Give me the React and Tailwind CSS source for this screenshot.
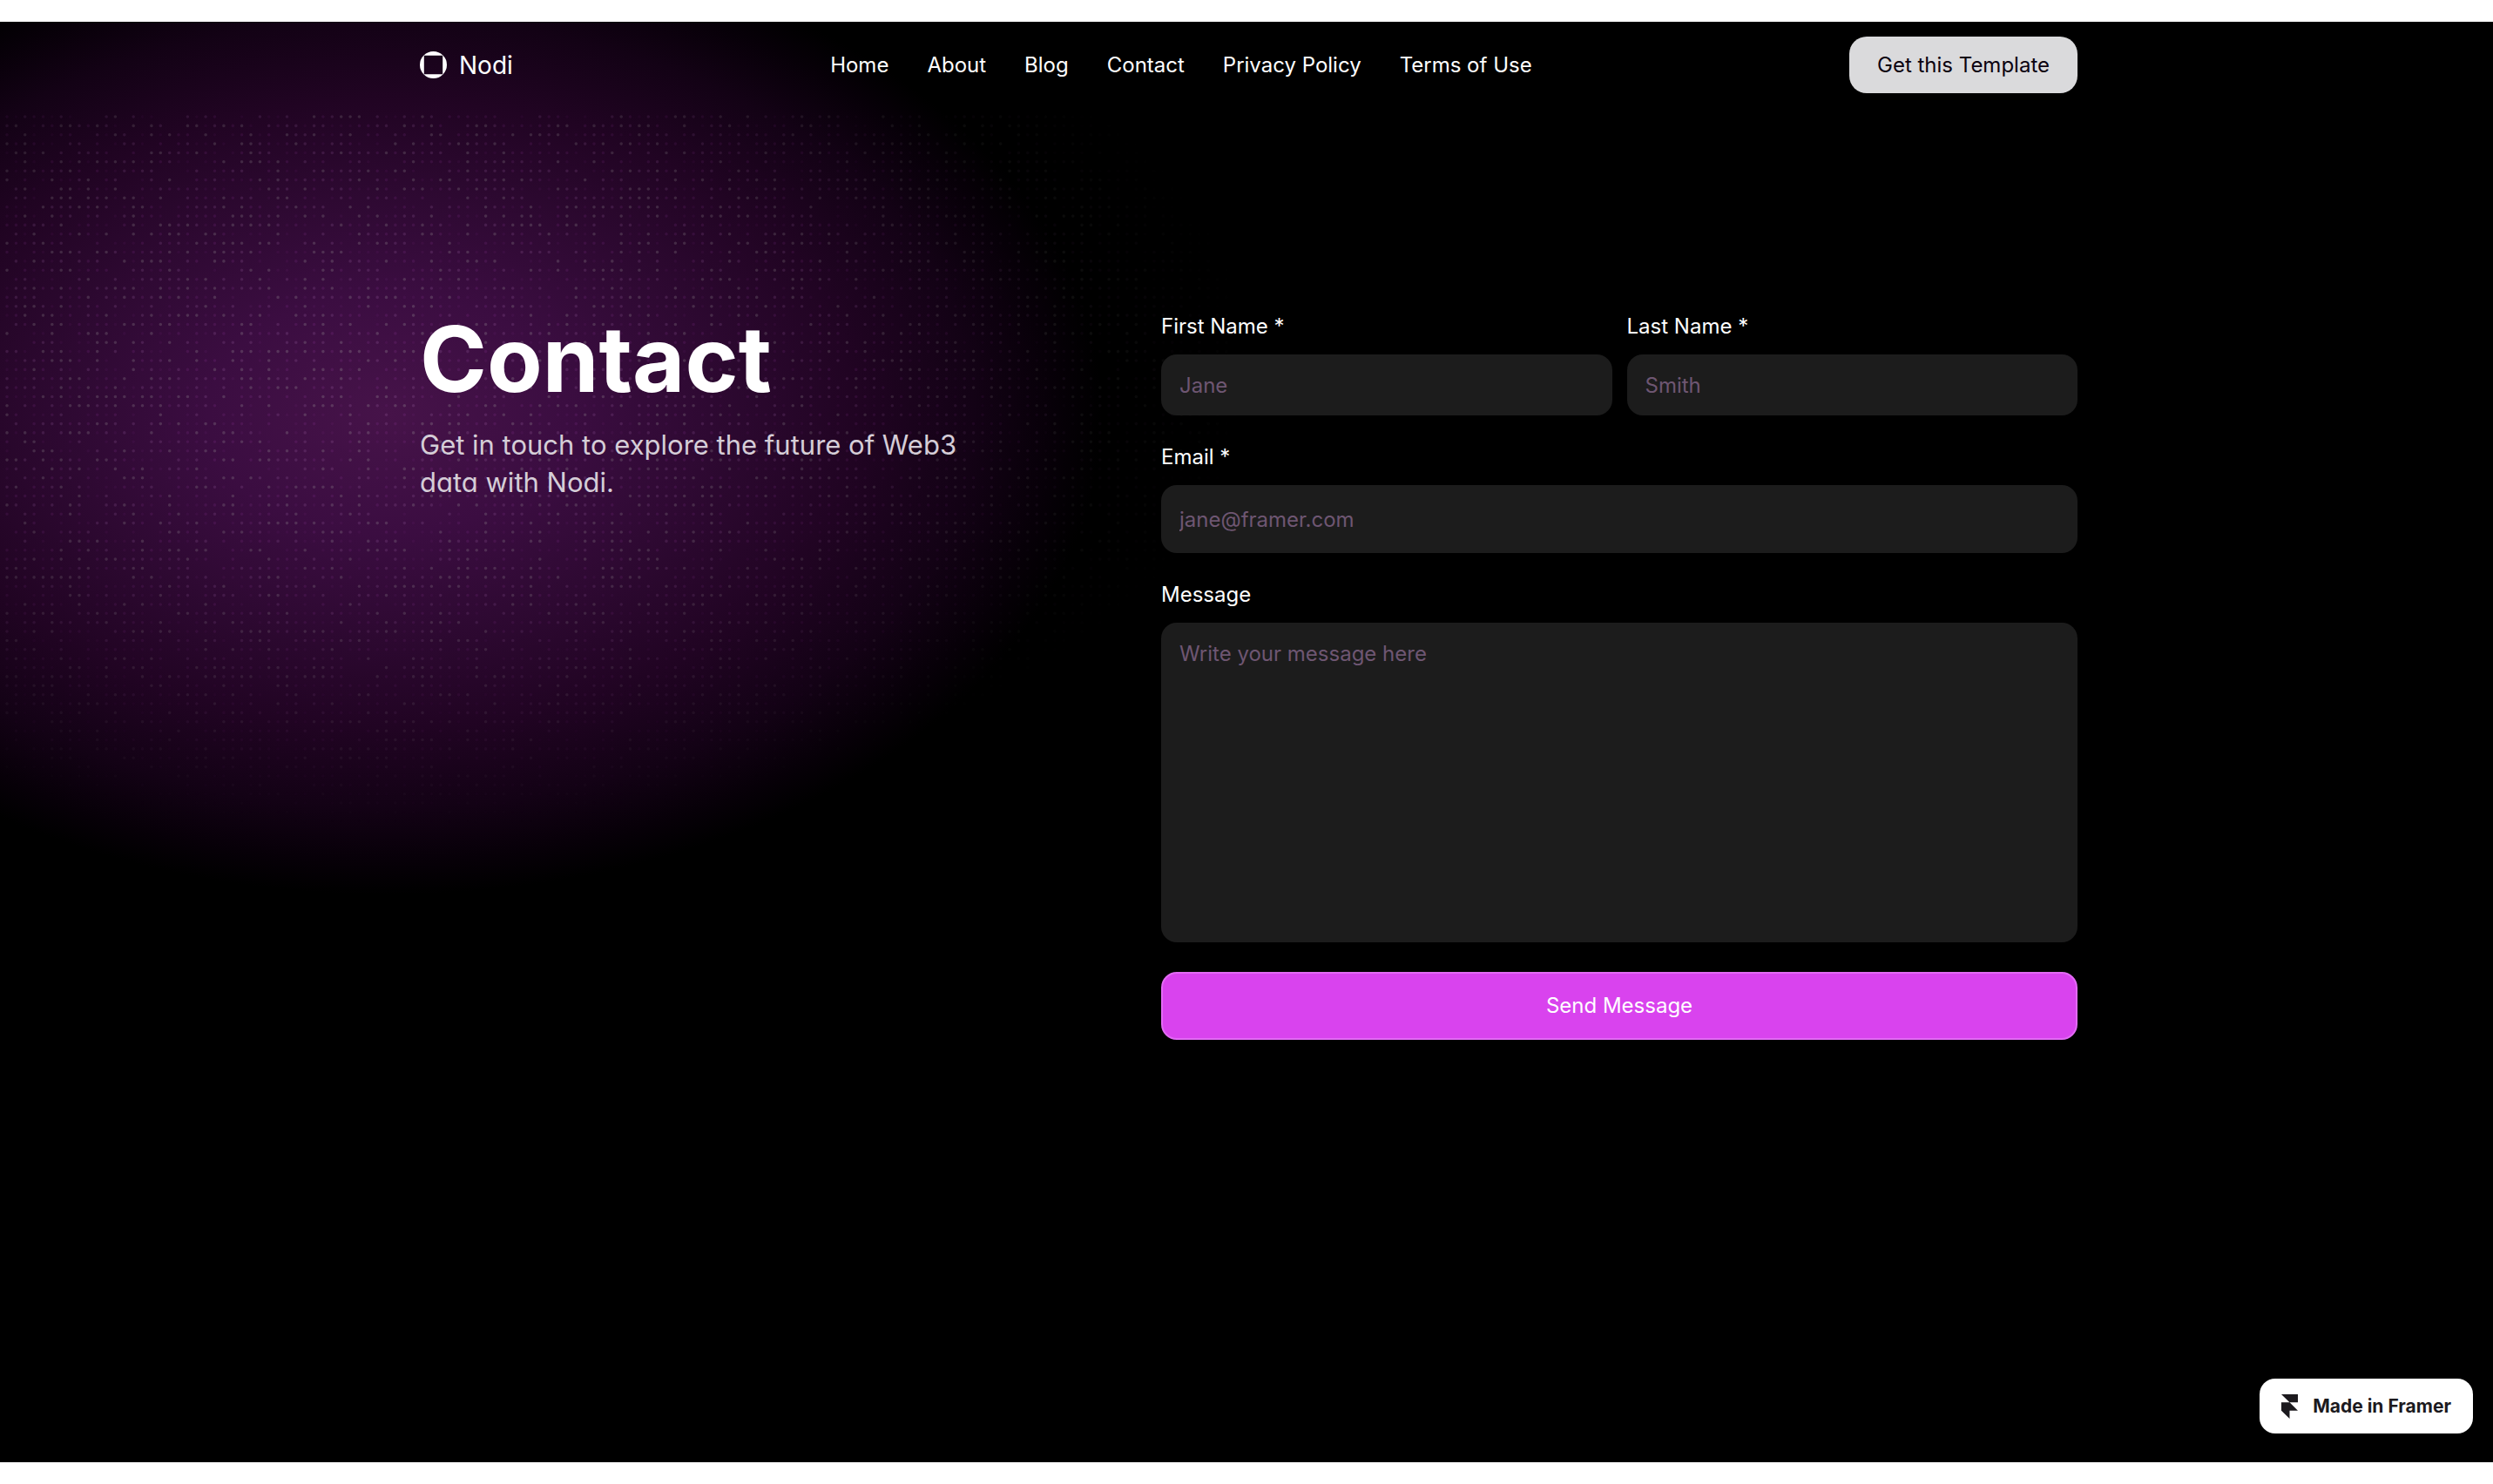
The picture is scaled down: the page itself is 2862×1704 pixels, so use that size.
// App.jsx
import { useMemo } from 'react';

const NAV_LINKS = ['Home', 'About', 'Blog', 'Contact', 'Privacy Policy', 'Terms of Use'];

const DOT_COLS = 140;
const DOT_ROWS = 82;
const DOT_PITCH = 10.37;
const DOT_TIERS = [
    { color: '#a03fae', opacity: 0.08 },
    { color: '#a03fae', opacity: 0.17 },
    { color: '#a86fb0', opacity: 0.22 },
    { color: '#a9a9a8', opacity: 0.26 },
];

// small seeded generator so the dots stay the same on every render
const createRandom = (seed) => {
    let state = seed;
    return () => {
        state = (state * 1664525 + 1013904223) % 4294967296;
        return state / 4294967296;
    };
};

const buildDotPaths = () => {
    const random = createRandom(42);
    const paths = DOT_TIERS.map(() => []);
    for (let row = 0; row < DOT_ROWS; row++) {
        for (let col = 0; col < DOT_COLS; col++) {
            const tier = Math.floor(random() * 5);
            if (tier >= DOT_TIERS.length) continue;
            paths[tier].push(`M${(8 + col * DOT_PITCH).toFixed(1)} ${(109 + row * DOT_PITCH).toFixed(1)}h0`);
        }
    }
    return paths.map((parts) => parts.join(''));
};

const Background = () => {
    const dotPaths = useMemo(buildDotPaths, []);

    return (
        <svg className="pointer-events-none absolute top-0 left-0" width="1500" height="1100" aria-hidden="true">
            <defs>
                <radialGradient
                    id="glow"
                    gradientUnits="userSpaceOnUse"
                    cx="0"
                    cy="0"
                    r="1"
                    gradientTransform="translate(445 450) scale(820 552)"
                >
                    <stop offset="0" stopColor="#461349" />
                    <stop offset="0.25" stopColor="#3b0d41" />
                    <stop offset="0.45" stopColor="#2e0932" />
                    <stop offset="0.65" stopColor="#210423" />
                    <stop offset="0.82" stopColor="#130215" />
                    <stop offset="0.93" stopColor="#070008" />
                    <stop offset="1" stopColor="#000000" />
                </radialGradient>
                <radialGradient
                    id="dotFade"
                    gradientUnits="userSpaceOnUse"
                    cx="0"
                    cy="0"
                    r="1"
                    gradientTransform="translate(440 400) scale(1000 530)"
                >
                    <stop offset="0" stopColor="#fff" />
                    <stop offset="0.5" stopColor="#fff" stopOpacity="0.8" />
                    <stop offset="1" stopColor="#fff" stopOpacity="0" />
                </radialGradient>
                <mask id="dotMask" maskUnits="userSpaceOnUse" x="0" y="0" width="1500" height="1100">
                    <rect width="1500" height="1100" fill="url(#dotFade)" />
                </mask>
            </defs>
            <rect width="1500" height="1100" fill="url(#glow)" />
            <g mask="url(#dotMask)" strokeWidth="3.6" strokeLinecap="round">
                {dotPaths.map((d, index) => (
                    <path
                        key={index}
                        d={d}
                        stroke={DOT_TIERS[index].color}
                        strokeOpacity={DOT_TIERS[index].opacity}
                    />
                ))}
            </g>
        </svg>
    );
};

const Logo = () => (
    <svg className="size-[31px]" viewBox="0 0 31 31" fill="currentColor" aria-hidden="true">
        <path
            fillRule="evenodd"
            d="M15.5 0a15.5 15.5 0 1 1 0 31a15.5 15.5 0 0 1 0-31zM4.8 4.8v21.4h21.4V4.8z"
        />
    </svg>
);

const Header = () => (
    <header className="flex h-[99px] items-center justify-between">
        <a href="#home" className="flex items-center gap-[14px] text-[28px] leading-9">
            <Logo />
            Nodi
        </a>
        <nav className="flex gap-11 text-2xl">
            {NAV_LINKS.map((link) => (
                <a key={link} href="#top" className="whitespace-nowrap hover:opacity-80">
                    {link}
                </a>
            ))}
        </nav>
        <a
            href="#template"
            className="flex h-[65px] items-center rounded-[20px] bg-[#dadadc] px-8 text-2xl whitespace-nowrap text-[#0c0210]"
        >
            Get this Template
        </a>
    </header>
);

const FIELD =
    'w-full rounded-[18px] bg-[#1c1c1c] px-[21px] text-2xl text-white placeholder:text-[#6e5672] focus:outline-none';

const Field = ({ id, label, children }) => (
    <div className="flex min-w-0 flex-1 flex-col gap-[14px]">
        <label htmlFor={id} className="text-2xl leading-9">
            {label}
        </label>
        {children}
    </div>
);

const ContactForm = () => (
    <form className="flex flex-1 flex-col gap-[30px]" onSubmit={(e) => e.preventDefault()}>
        <div className="flex gap-[17px]">
            <Field id="firstName" label="First Name *">
                <input id="firstName" type="text" required placeholder="Jane" className={`${FIELD} h-[70px]`} />
            </Field>
            <Field id="lastName" label="Last Name *">
                <input id="lastName" type="text" required placeholder="Smith" className={`${FIELD} h-[70px]`} />
            </Field>
        </div>
        <Field id="email" label="Email *">
            <input id="email" type="email" required placeholder="jane@framer.com" className={`${FIELD} h-[78px]`} />
        </Field>
        <Field id="message" label="Message">
            <textarea
                id="message"
                placeholder="Write your message here"
                className={`${FIELD} block h-[367px] resize-none py-[18px] leading-9`}
            />
        </Field>
        <button
            type="submit"
            className="mt-1 h-[78px] rounded-[18px] border-2 border-[#e36af5] bg-[#d943ee] text-2xl text-white"
        >
            Send Message
        </button>
    </form>
);

const FramerBadge = () => (
    <a
        href="#framer"
        className="absolute right-[23px] bottom-[33px] flex h-[63px] items-center gap-[17px] rounded-[18px] bg-white px-[25px] text-[21px] font-bold text-[#1c1a1e]"
    >
        <svg className="h-7 w-[19px]" viewBox="0 0 19 28" fill="currentColor" aria-hidden="true">
            <path d="M0 0h19v9.3H9.5zM0 9.3h9.5l9.5 9.4H0zM0 18.7h9.5V28z" />
        </svg>
        Made in Framer
    </a>
);

const App = () => {
    return (
        <div className="flex min-h-screen flex-col bg-white py-[25px] font-['Inter',sans-serif]">
            <div className="relative flex-1 overflow-hidden bg-black pl-[5px] text-white">
                <Background />
                <div className="relative mx-auto max-w-[1903px]">
                    <Header />
                    <main className="flex pt-[233px]">
                        <section className="flex w-[851px] shrink-0 flex-col gap-[22px]">
                            <h1 className="text-[104px] leading-[110px] font-bold">Contact</h1>
                            <p className="max-w-[660px] text-[31px] leading-[43px] text-[#d5cdd7] [font-feature-settings:'cv11']">
                                Get in touch to explore the future of Web3 data with Nodi.
                            </p>
                        </section>
                        <ContactForm />
                    </main>
                </div>
                <FramerBadge />
            </div>
        </div>
    );
};

export default App;
